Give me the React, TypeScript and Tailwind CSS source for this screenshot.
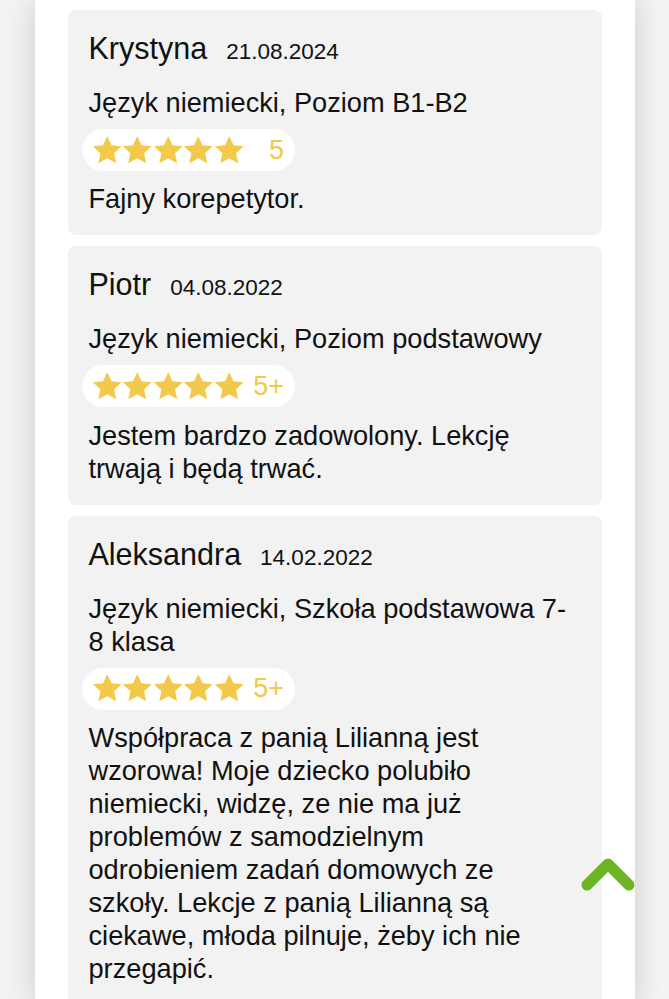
import React from 'react';

interface Review {
  name: string;
  date: string;
  subject: React.ReactNode;
  grade: string;
  text: string;
}

const reviews: Review[] = [
  {
    name: 'Krystyna',
    date: '21.08.2024',
    subject: 'Język niemiecki, Poziom B1-B2',
    grade: '5',
    text: 'Fajny korepetytor.',
  },
  {
    name: 'Piotr',
    date: '04.08.2022',
    subject: 'Język niemiecki, Poziom podstawowy',
    grade: '5+',
    text: 'Jestem bardzo zadowolony. Lekcję trwają i będą trwać.',
  },
  {
    name: 'Aleksandra',
    date: '14.02.2022',
    subject: (
      <>
        Język niemiecki, Szkoła podstawowa 7-<wbr />8 klasa
      </>
    ),
    grade: '5+',
    text: 'Współpraca z panią Lilianną jest wzorowa! Moje dziecko polubiło niemiecki, widzę, ze nie ma już problemów z samodzielnym odrobieniem zadań domowych ze szkoły. Lekcje z panią Lilianną są ciekawe, młoda pilnuje, żeby ich nie przegapić.',
  },
];

const Star = () => (
  <svg viewBox="0 0 24 24" className="w-[30.5px] h-[30.5px]">
    <path
      d="M12 0.9l3.4 7.1 7.9.9-5.9 5.4 1.6 7.9-7-4-7 4 1.6-7.9L0.7 8.9l7.9-.9z"
      fill="#f2c94a"
    />
  </svg>
);

const Rating = ({ grade }: { grade: string }) => (
  <div className="inline-flex items-center h-[42px] bg-white rounded-full pl-[10px] pr-[11px] -ml-[7px]">
    {[0, 1, 2, 3, 4].map((i) => (
      <Star key={i} />
    ))}
    <span className="w-[40px] text-right text-[27px] leading-none text-[#f0c948]">{grade}</span>
  </div>
);

const ReviewCard = ({ review }: { review: Review }) => (
  <div className="bg-[#f2f2f2] rounded-[8px] pt-[20px] pb-[20px] pl-[21px] pr-[30px]">
    {/* Header */}
    <div className="flex items-baseline gap-[19px] h-[36px]">
      <span className="text-[30.5px] leading-[36px] text-[#111]">{review.name}</span>
      <span className="text-[22.5px] leading-[36px] text-[#111]">{review.date}</span>
    </div>
    <div className="mt-[20px] text-[27.2px] leading-[33px] text-[#111]">{review.subject}</div>
    <div className="mt-[10px]">
      <Rating grade={review.grade} />
    </div>
    <p className="mt-[10px] text-[27.2px] leading-[33px] text-[#111]">{review.text}</p>
  </div>
);

export default function App() {
  return (
    <div className="min-h-screen bg-[#f3f3f3] font-['Liberation_Sans',Arial,sans-serif]">
      <div className="mx-auto w-[600px] min-h-screen bg-white shadow-[0_0_28px_rgba(0,0,0,0.16)] px-[33px] pt-[10px] flex flex-col gap-[11px]">
        {reviews.map((r) => (
          <ReviewCard key={r.name} review={r} />
        ))}
      </div>

      {/* Scroll to top */}
      <button className="fixed left-[580px] top-[854px] w-[56px] h-[40px]">
        <svg viewBox="0 0 56 40" className="w-full h-full">
          <path
            d="M7 31L28 10l21 21"
            fill="none"
            stroke="#6cb424"
            strokeWidth="11"
            strokeLinecap="round"
            strokeLinejoin="round"
          />
        </svg>
      </button>
    </div>
  );
}
